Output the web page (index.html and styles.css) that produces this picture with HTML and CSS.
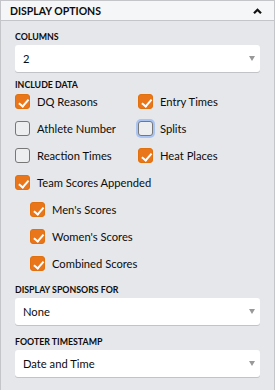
FILE: index.html
```html
<!DOCTYPE html>
<html lang="en">
<head>
  <meta charset="UTF-8" />
  <title>Display Options</title>
  <link rel="stylesheet" href="styles.css">
</head>
<body>
  <div class="panel">
    <div class="panel-head">
      <span>DISPLAY OPTIONS</span>
      <svg class="chevron" width="9" height="6" viewBox="0 0 9 6"><path d="M1 5.2 L4.5 1.7 L8 5.2" fill="none" stroke="#111" stroke-width="2.2"/></svg>
    </div>

    <div class="panel-body">
      <div class="field">
        <div class="label">COLUMNS</div>
        <div class="select"><span>2</span><span class="arrow"></span></div>
      </div>

      <div class="label">INCLUDE DATA</div>
      <div class="grid">
        <label class="check on"><span class="box"></span>DQ Reasons</label>
        <label class="check on"><span class="box"></span>Entry Times</label>
        <label class="check"><span class="box"></span>Athlete Number</label>
        <label class="check focus"><span class="box"></span>Splits</label>
        <label class="check"><span class="box"></span>Reaction Times</label>
        <label class="check on"><span class="box"></span>Heat Places</label>
      </div>
      <div class="checks">
        <label class="check on"><span class="box"></span>Team Scores Appended</label>
        <div class="sub checks">
          <label class="check on"><span class="box"></span>Men's Scores</label>
          <label class="check on"><span class="box"></span>Women's Scores</label>
          <label class="check on"><span class="box"></span>Combined Scores</label>
        </div>
      </div>

      <div class="field spaced">
        <div class="label">DISPLAY SPONSORS FOR</div>
        <div class="select"><span>None</span><span class="arrow"></span></div>
      </div>
      <div class="field">
        <div class="label">FOOTER TIMESTAMP</div>
        <div class="select"><span>Date and Time</span><span class="arrow"></span></div>
      </div>
    </div>
  </div>
</body>
</html>
```

FILE: styles.css
```css
* { box-sizing: border-box; }
body {
  margin: 0;
  font-family: 'Lato', 'Open Sans', sans-serif;
  color: #0c0c0c;
  background: #e6e7ea;
}

.panel {
  width: 275px;
  height: 390px;
  border: 1px solid #c4c5c8;
  border-bottom: none;
  background: #e6e7ea;
}

.panel-head {
  height: 20px;
  display: flex;
  align-items: center;
  justify-content: space-between;
  padding: 0 12px 0 9px;
  background: #f5f6f7;
  border-bottom: 1px solid #c4c5c8;
  font-size: 10.5px;
  font-weight: 700;
}

.panel-body {
  padding: 10px 14px 0 14px;
}

.label {
  font-size: 8.8px;
  font-weight: 700;
  line-height: 12px;
}

.field { margin-bottom: 7px; }
.field.spaced { margin-top: 10px; margin-bottom: 11px; }

.select {
  margin-top: 2px;
  height: 27px;
  display: flex;
  align-items: center;
  justify-content: space-between;
  padding: 0 5px 0 8px;
  background: #fff;
  border-radius: 3px;
  box-shadow: 0 1px 0 #c2c3c6;
  font-size: 11.2px;
}

.arrow {
  width: 0;
  height: 0;
  border-left: 3px solid transparent;
  border-right: 3px solid transparent;
  border-top: 5px solid #999;
}

.grid {
  display: grid;
  grid-template-columns: 123px 1fr;
  row-gap: 6px;
  margin-bottom: 6px;
}

.checks {
  display: flex;
  flex-direction: column;
  gap: 6px;
}

.check {
  display: flex;
  align-items: center;
  height: 21px;
  font-size: 11.2px;
}

.box {
  width: 15px;
  height: 15px;
  margin-right: 7px;
  border: 1px solid #777;
  border-radius: 3px;
  background: #eceef0;
  position: relative;
}

.check.on .box {
  border-color: #e1700f;
  background: #e9761a;
}

.check.on .box::after {
  content: "";
  position: absolute;
  left: 4.5px;
  top: 1.5px;
  width: 3.5px;
  height: 7.5px;
  border: solid #fff;
  border-width: 0 2.4px 2.4px 0;
  transform: rotate(40deg);
}

.check.focus .box {
  box-shadow: 0 0 0 2px #a9c4f2;
}

.sub {
  padding-left: 15px;
}
```
